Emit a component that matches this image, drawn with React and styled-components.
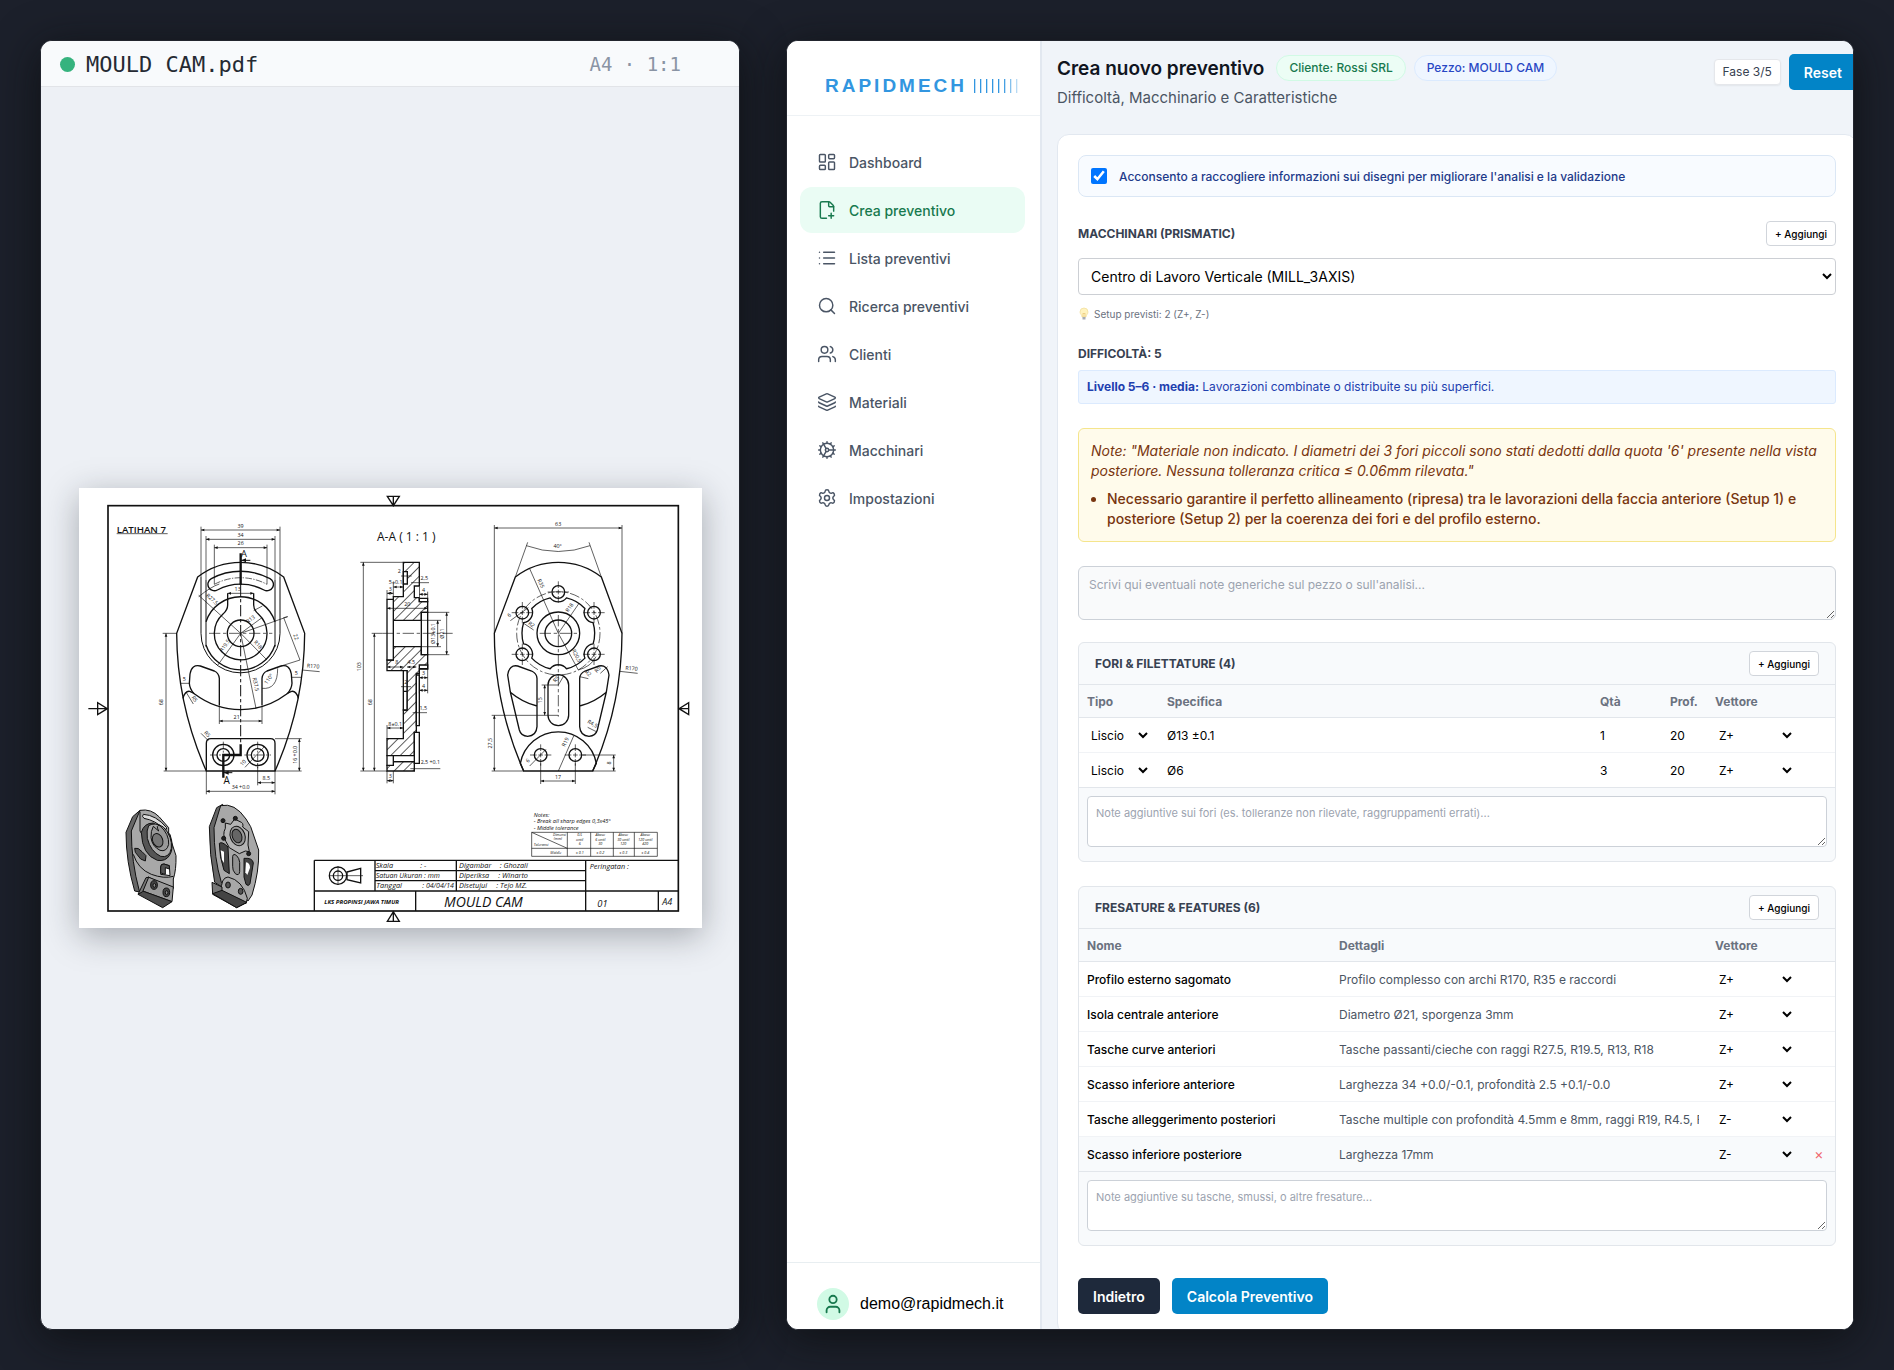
import { useState } from "react";
import styled, { createGlobalStyle, css } from "styled-components";
import { LayoutDashboard, List, Search, Users, Layers, Cog, Settings, User } from "lucide-react";

const GlobalStyle = createGlobalStyle`
    * {
        box-sizing: border-box;
    }

    body {
        margin: 0;
        background: #1c202b;
        font-family: Inter, "Liberation Sans", sans-serif;
        font-size: 12px;
        color: #000;
    }

    button, input, select, textarea {
        font-family: inherit;
    }
`

const PAGE = styled.div`
    display: grid;
    grid-template-columns: 700fr 1068fr;
    gap: 46px;
    height: 100vh;
    padding: 40px;
`

const PANEL = styled.section`
    display: flex;
    flex-direction: ${(props) => props.$row ? "row" : "column"};
    min-width: 0;
    min-height: 0;
    overflow: hidden;
    border: 1px solid #22252e;
    border-radius: 12px;
    background: ${(props) => props.$background};
    box-shadow: 0 8px 44px rgba(10, 11, 12, 0.7);
`

/* document viewer */

const FILE_BAR = styled.header`
    display: flex;
    align-items: center;
    gap: 11px;
    height: 46px;
    padding: 1px 58px 0 19px;
    border-bottom: 1px solid #e2e4e8;
    background: #f8fafc;
    font-family: "DejaVu Sans Mono", monospace;
    font-size: 22px;
    color: #252a33;
`

const DOT = styled.span`
    width: 15px;
    height: 15px;
    border-radius: 50%;
    background: #36b37e;
`

const FILE_SCALE = styled.span`
    margin-left: auto;
    font-size: 19px;
    color: #8a94a4;
`

const VIEWER = styled.div`
    display: flex;
    flex: 1;
    align-items: center;
    padding: 0 37px 0 38px;
`

const SHEET = styled.svg`
    display: block;
    width: 100%;
    background: #fff;
    box-shadow: 0 8px 32px rgba(30, 35, 45, 0.34);
    fill: none;
    stroke: #111;
    stroke-width: 4;

    text {
        fill: #111;
        stroke: none;
        font-family: "Open Sans", "Noto Sans", sans-serif;
    }

    .thin {
        stroke-width: 2;
    }

    .bold {
        stroke-width: 7;
    }

    .italic {
        font-style: italic;
    }
`

/* side bar */

const SIDEBAR = styled.aside`
    display: flex;
    flex-direction: column;
    flex: 0 0 255px;
    border-right: 2px solid #e2e8f0;
    background: #fff;
`

const BRAND = styled.div`
    display: flex;
    align-items: center;
    gap: 6px;
    height: 75px;
    padding: 16px 16px 0 38px;
    border-bottom: 1px solid #eef2f5;
    font-family: "Liberation Sans", Arial, sans-serif;
    font-size: 19px;
    font-weight: 700;
    letter-spacing: 3px;
    color: #3296e0;
`

const NAV = styled.nav`
    display: flex;
    flex: 1;
    flex-direction: column;
    gap: 2px;
    padding: 23px 15px 0 13px;
`

const NAV_LINK = styled.a`
    display: flex;
    align-items: center;
    gap: 12px;
    height: 46px;
    padding: 0 17px;
    border-radius: 12px;
    font-size: 14px;
    font-weight: 500;
    text-decoration: none;
    color: ${(props) => props.$active ? "#18794e" : "#4a5565"};
    background: ${(props) => props.$active ? "#eafcf4" : "transparent"};
`

const ACCOUNT = styled.div`
    display: flex;
    align-items: center;
    gap: 11px;
    padding: 25px 20px 9px 30px;
    border-top: 1px solid #e8eef1;
    font-family: "Liberation Sans", Arial, sans-serif;
    font-size: 16px;
`

const AVATAR = styled.span`
    display: grid;
    place-items: center;
    width: 32px;
    height: 32px;
    border-radius: 50%;
    background: #d1fae5;
    color: #18794e;
`

/* main column */

const MAIN = styled.main`
    flex: 1;
    min-width: 0;
    overflow: hidden;
    padding: 13px 0 0 15px;
    background: #f0f4f9;
`

const TOP = styled.header`
    display: flex;
    justify-content: space-between;
    align-items: flex-start;
    margin-right: -4px;
`

const TITLE_ROW = styled.div`
    display: flex;
    align-items: center;
    height: 28px;
`

const TITLE = styled.h1`
    margin: 0 12px 0 0;
    font-size: 19px;
    font-weight: 600;
    color: #10151f;
`

const CHIP = styled.span`
    margin-right: 8px;
    padding: 0 12px;
    border: 1px solid ${(props) => props.$border};
    border-radius: 13px;
    font-weight: 500;
    line-height: 24px;
    color: ${(props) => props.$color};
    background: ${(props) => props.$background};
`

const SUBTITLE = styled.p`
    margin: 4px 0 0;
    font-size: 15px;
    line-height: 24px;
    color: #4b5563;
`

const TOP_ACTIONS = styled.div`
    display: flex;
    align-items: center;
    gap: 8px;
`

const PHASE = styled.span`
    padding: 0 8px;
    border: 1px solid #e5e7eb;
    border-radius: 4px;
    line-height: 24px;
    color: #374151;
    background: #fff;
    box-shadow: 0 1px 2px rgba(0, 0, 0, 0.06);
`

const BUTTON = styled.button`
    height: 36px;
    padding: 0 15px;
    border: 0;
    border-radius: 5px;
    font-size: 14px;
    font-weight: 600;
    color: #fff;
    background: ${(props) => props.$dark ? "#1e293b" : "#0284c7"};
`

const CARD = styled.div`
    margin: 24px -4px 0 0;
    padding: 20px;
    border: 1px solid #e2e8f0;
    border-radius: 12px;
    background: #fff;
`

const CONSENT = styled.label`
    display: flex;
    align-items: center;
    gap: 12px;
    height: 42px;
    margin-bottom: 24px;
    padding: 0 12px;
    border: 1px solid #dbe7f5;
    border-radius: 8px;
    font-weight: 500;
    color: #1e3a8a;
    background: #f8fbff;
`

const CHECKBOX = styled.input`
    width: 16px;
    height: 16px;
    margin: 0;
`

const FIELD_HEAD = styled.div`
    display: flex;
    justify-content: space-between;
    align-items: center;
`

const capsText = css`
    margin: 0;
    font-size: 12px;
    font-weight: 700;
    line-height: 18px;
    color: #374151;
`

const FIELD_LABEL = styled.label`
    ${capsText}
`

const HEADING = styled.h2`
    ${capsText}
`

const ADD_BUTTON = styled.button`
    height: 25px;
    padding: 0 8px;
    border: 1px solid #d1d5db;
    border-radius: 4px;
    font-size: 10px;
    font-weight: 500;
    color: #000;
    background: #fff;
`

const MACHINE_SELECT = styled.select`
    display: block;
    width: 100%;
    height: 37px;
    margin-top: 12px;
    padding: 0 0 0 8px;
    border: 1px solid #cccfd4;
    border-radius: 4px;
    font-size: 14px;
    color: #000;
    background: #fff;
`

const HINT = styled.p`
    display: flex;
    align-items: center;
    gap: 4px;
    margin: 10px 0 22px;
    font-size: 10px;
    line-height: 18px;
    color: #6b7280;
`

const LEVEL = styled.p`
    margin: 7px 0 24px;
    padding: 0 8px;
    border: 1px solid #dbeafe;
    border-radius: 3px;
    line-height: 32px;
    color: #1e40af;
    background: #eff6ff;
`

const WARNING = styled.div`
    margin-bottom: 24px;
    padding: 12px;
    border: 1px solid #f5e58c;
    border-radius: 6px;
    font-size: 14px;
    line-height: 20px;
    color: #78350f;
    background: #fffbeb;

    p {
        margin: 0 0 8px;
        font-style: italic;
    }

    ul {
        margin: 0;
        padding-left: 16px;
        font-weight: 500;
    }
`

const NOTES = styled.textarea`
    display: block;
    width: 100%;
    height: ${(props) => props.$large ? "54px" : "51px"};
    padding: ${(props) => props.$large ? "9px 10px" : "7px 8px"};
    border: 1px solid #ccd1d8;
    border-radius: ${(props) => props.$large ? "6px" : "4px"};
    font-size: ${(props) => props.$large ? "12px" : "11px"};
    line-height: 18px;
    background: ${(props) => props.$large ? "#f9fafb" : "#fff"};

    &::placeholder {
        color: #9ca3af;
    }
`

const GROUP = styled.section`
    margin-top: ${(props) => props.$gap};
    overflow: hidden;
    border: 1px solid #e2e6eb;
    border-radius: 6px;
    background: #f8fafc;
`

const GROUP_HEAD = styled(FIELD_HEAD)`
    height: 42px;
    padding: 0 16px;
    border-bottom: 1px solid #e2e6eb;
`

const GROUP_FOOT = styled.div`
    padding: 8px 8px 14px;
`

const TABLE = styled.table`
    width: 100%;
    table-layout: fixed;
    border-collapse: separate;
    border-spacing: 0;
`

const TH = styled.th`
    width: ${(props) => props.$width || "auto"};
    height: 33px;
    padding: 0 8px;
    border-bottom: 1px solid #e2e6eb;
    font-weight: 700;
    text-align: left;
    color: #6b7280;
`

const ROW = styled.tr`
    background: ${(props) => props.$hovered ? "#f8fafc" : "#fff"};

    td {
        height: 35px;
        padding: 0 8px;
        border-bottom: 1px solid #f1f3f6;
    }

    &:last-child td {
        border-bottom-color: #e2e6eb;
    }
`

const CELL_INPUT = styled.input`
    display: block;
    width: 100%;
    padding: 0;
    border: 0;
    font-size: 12px;
    font-weight: ${(props) => props.$name ? 500 : 400};
    color: ${(props) => props.$muted ? "#4b5563" : "#000"};
    background: transparent;
`

const CELL_SELECT = styled.select`
    display: block;
    width: 100%;
    padding: 0;
    border: 0;
    font-size: 12px;
    color: #000;
    background: transparent;
`

const REMOVE = styled.button`
    display: block;
    margin: 0 auto;
    padding: 0;
    border: 0;
    font-size: 14px;
    line-height: 16px;
    color: #f0666c;
    background: transparent;
`

const FORM_ACTIONS = styled.div`
    display: flex;
    gap: 12px;
    margin-top: 32px;
`

function FilePlusIcon ({size, strokeWidth}) {
    return (
        <svg width={size} height={size} viewBox="0 0 24 24" fill="none" stroke="currentColor" strokeWidth={strokeWidth} strokeLinecap="round" strokeLinejoin="round">
            <path d="M11.35 22H6a2 2 0 0 1-2-2V4a2 2 0 0 1 2-2h8a2.4 2.4 0 0 1 1.7.7l3.6 3.6A2.4 2.4 0 0 1 20 8v5.35" />
            <path d="M14 2v5a1 1 0 0 0 1 1h5" />
            <path d="M14 19h6M17 16v6" />
        </svg>
    )
}

function BulbIcon () {
    return (
        <svg width="12" height="14" viewBox="0 0 12 14" fill="none">
            <path d="M6 1a4 4 0 0 0-4 4c0 2 2 3 2 5h4c0-2 2-3 2-5a4 4 0 0 0-4-4z" fill="#fff3bf" stroke="#f3dfa0" strokeWidth="0.8" />
            <path d="M5 10V6l1 1 1-1v4" stroke="#e8c270" strokeWidth="0.6" />
            <path d="M4.5 10h3v2.5h-3z" fill="#a8adb5" />
        </svg>
    )
}

function LogoBars () {
    const opacities = [1, 1, 1, 1, 1, 0.9, 0.6, 0.35]

    return (
        <svg width="46" height="14" viewBox="0 0 46 14">
            {opacities.map((opacity, index) => (
                <rect key={index} x={index * 6 + 1} y="0" width="1.3" height="14" fill="#3296e0" opacity={opacity} />
            ))}
        </svg>
    )
}

/* dimension line between two points on the same row or column */
function Dim ({x, y, to, vertical, label, at, size = 16}) {
    const end = vertical ? [x, to] : [to, y]
    const middle = at || [(x + end[0]) / 2, (y + end[1]) / 2]
    const heads = vertical
        ? `M${x} ${y}l-4 10h8zM${x} ${to}l-4-10h8z`
        : `M${x} ${y}l10-4v8zM${to} ${y}l-10-4v8z`
    const tx = vertical ? middle[0] - 8 : middle[0]
    const ty = vertical ? middle[1] : middle[1] - 7

    return (
        <g>
            <path className="thin" d={`M${x} ${y}L${end[0]} ${end[1]}`} />
            <path d={heads} fill="#111" stroke="none" />
            <text x={tx} y={ty} fontSize={size} textAnchor="middle" transform={vertical ? `rotate(-90 ${tx} ${ty})` : undefined}>{label}</text>
        </g>
    )
}

function Note ({x, y, angle = 0, size = 16, children}) {
    return <text x={x} y={y} fontSize={size} textAnchor="middle" transform={`rotate(${angle} ${x} ${y})`}>{children}</text>
}

function FrontView () {
    return (
        <g transform="translate(-24 -24)">
            <text x="137" y="159" fontSize="29" fontWeight="600">LATIHAN 7</text>
            <path className="thin" d="M137 161H290" />
            <path d="M380 291A212 212 0 0 1 638 291L701 460A1030 1030 0 0 1 612 873H406A1030 1030 0 0 1 317 460Z" />
            <path className="thin" d="M390 140V290M627 140V290" />
            <path d="M390 290V460A118 118 0 0 0 627 460V290M405 300V500M612 300V500" strokeWidth="3" />
            <path d="M405 425A109 109 0 0 1 612 425M405 495A109 109 0 0 0 612 495" />
            <path d="M470 340V375Q470 390 456 402A79 79 0 1 0 562 402Q548 390 548 375V340" />
            <circle cx="509" cy="460" r="40" />
            <path d="M421 296A186 186 0 0 1 597 296A19 19 0 0 1 579 330A148 148 0 0 0 439 330A19 19 0 0 1 421 296Z" />
            <path className="thin" d="M430 313A167 167 0 0 1 588 313" strokeDasharray="20 4 4 4" />
            <path d="M445 675V595Q443 578 430 573L388 558Q362 552 357 582L355 610Q356 626 368 640" />
            <path d="M573 675V595Q575 578 588 573L630 558Q656 552 661 582L663 610Q662 626 650 640" />
            <path d="M336 655Q342 632 356 634Q366 637 372 643A228 228 0 0 0 646 643Q652 637 662 634Q676 632 682 655" />
            <path d="M406 873V790Q406 776 420 776H598Q612 776 612 790V873" />
            {[457, 560].map((x) => (
                <g key={x}>
                    <circle cx={x} cy="825" r="32" />
                    <circle cx={x} cy="825" r="19" />
                    <path className="thin" d={`M${x - 40} 825H${x + 40}M${x} 785V865`} strokeDasharray="22 5 6 5" />
                </g>
            ))}
            <path d="M509 315V790" strokeDasharray="34 8 10 8" strokeWidth="3" />
            <path className="thin" d="M414 460H604" strokeDasharray="34 8 10 8" />
            <path className="bold" d="M509 220V315M509 793V825H457V893" />
            <path d="M509 241H538M457 878H484" strokeWidth="3" />
            <path d="M511 241l14-6v12zM459 878l14-6v12z" fill="#111" stroke="none" />
            <Note x={519} y={231} size={28}>A</Note>
            <Note x={467} y={912} size={30}>A</Note>

            <path className="thin" d="M405 168V300M612 168V300M430 194V313M588 194V313" />
            <Dim x={390} y={150} to={627} label="39" />
            <Dim x={405} y={178} to={612} label="34" />
            <Dim x={430} y={203} to={588} label="26" />
            <Dim x={470} y={340} to={548} label="13" at={[500, 340]} />
            <path className="thin" d="M275 460H317M278 873H406M612 776H692M612 873H692M406 873V943M612 873V943M560 850V916M445 675V732M573 675V732" />
            <Dim x={285} y={460} to={873} vertical label="68" />
            <Dim x={685} y={776} to={873} vertical label="16 +0.0" />
            <Dim x={445} y={723} to={573} label="21" at={[497, 723]} />
            <Dim x={406} y={934} to={612} label="34 +0.0" />
            <Dim x={560} y={908} to={612} label="8.5" />
            <path className="thin" d="M509 460L383 346M509 460L440 556M509 460L588 540M509 460L573 413M509 460L555 685M509 460L650 410L638 413L687 540L630 558M693 570L746 575M328 610H357M661 592H690M345 636L367 672M390 760L412 782M522 862L580 800M383 350Q420 320 445 312M548 392L574 378M573 625Q620 630 620 565" />
            <Note x={420} y={362} angle={42}>R27.5</Note>
            <Note x={466} y={500} angle={-54}>R19.5</Note>
            <Note x={557} y={498} angle={47}>R18</Note>
            <Note x={542} y={422} angle={-36}>R13</Note>
            <Note x={549} y={614} angle={78}>R37.5</Note>
            <Note x={670} y={473} angle={68}>22</Note>
            <Note x={726} y={564} angle={5}>R170</Note>
            <Note x={598} y={600} angle={-55}>110°</Note>
            <Note x={340} y={602}>5</Note>
            <Note x={676} y={584}>5</Note>
            <Note x={366} y={660} angle={55}>R5</Note>
            <Note x={405} y={766} angle={45}>R5</Note>
            <Note x={520} y={852} angle={-45}>10</Note>
        </g>
    )
}

function SectionView () {
    return (
        <g transform="translate(786 -24)">
            <text x="108" y="184" fontSize="36">A-A ( 1 : 1 )</text>
            <path fill="url(#hatch)" d="M187 247H235V365H260V397H241V421H157V350H187Z" />
            <path fill="url(#hatch)" d="M157 500H241V524H260V567H235V580H226V757H220V827H138V776H187V690H198V572H138V540H157Z" />
            <path fill="url(#hatch)" d="M157 845H220V873H138V856H157Z" />
            <path fill="#fff" d="M187 275H199V312H187ZM235 318H220V353H235M138 358H157V540H138ZM241 397H260V524H241ZM235 355H260V365H235ZM235 555H260V566H235ZM187 572H198V690H187ZM187 634H198M226 585H235V737H226ZM220 757H235V850H220ZM138 827H157V856H138ZM157 827H220V845H157Z" />
            <path className="thin" d="M125 460H335" strokeDasharray="34 8 10 8" />
            <path className="thin" d="M58 247H187M58 873H138M92 460H125M260 397H325M260 524H325M241 421H300M241 500H300M138 735V776M157 873V910M138 873V910M138 330V358M157 310V350M260 335V355M260 567V640M235 567V640" />
            <Dim x={67} y={247} to={873} vertical label="103" />
            <Dim x={100} y={460} to={873} vertical label="68" />
            <Dim x={290} y={421} to={500} vertical label="Ø13±0.1" />
            <Dim x={317} y={397} to={524} vertical label="Ø21" />
            <Dim x={138} y={385} to={260} label="20" />
            <Dim x={157} y={321} to={187} label="5±0.1" at={[164, 320]} />
            <Dim x={138} y={340} to={157} label="3" />
            <Dim x={138} y={561} to={187} label="8" at={[167, 558]} />
            <Dim x={198} y={561} to={226} label="4.5" at={[211, 558]} />
            <Dim x={138} y={744} to={187} label="8±0.1" />
            <Dim x={235} y={343} to={260} label="4" />
            <Dim x={235} y={593} to={260} label="3" />
            <Dim x={235} y={631} to={260} label="4" />
            <Dim x={138} y={902} to={157} label="3" />
            <path className="thin" d="M180 288H212M210 308H264M180 620H210M215 698H258M208 866H298" />
            <Note x={175} y={280}>2</Note>
            <Note x={250} y={299}>2,5</Note>
            <Note x={194} y={612}>2</Note>
            <Note x={247} y={689}>1,5</Note>
            <Note x={268} y={853}>2,5 +0.1</Note>
        </g>
    )
}

/* contour of the raised flange, notched around each bolt hole */
function flangePath () {
    const point = (radius, degrees) => {
        const angle = degrees * Math.PI / 180
        return `${652 + radius * Math.cos(angle)} ${460 + radius * Math.sin(angle)}`
    }
    const parts = [30, 90, 150, 210, 270, 330].map((angle, index) => (
        `${index === 0 ? "M" : "A109 109 0 0 1 "}${point(109, angle - 13)}A31 31 0 0 0 ${point(109, angle + 13)}`
    ))
    return `${parts.join("")}A109 109 0 0 1 ${point(109, 17)}`
}

function RearView () {
    const holes = [[652, 336], [544, 398], [759, 398], [544, 523], [759, 523], [599, 825], [703, 825]]

    return (
        <g transform="translate(786 -24)">
            <path d="M523 291A212 212 0 0 1 781 291L843 460A1030 1030 0 0 1 755 873H548A1030 1030 0 0 1 460 460Z" />
            <path d={flangePath()} />
            <circle cx="652" cy="460" r="64" />
            <circle cx="652" cy="460" r="40" />
            <circle className="thin" cx="652" cy="460" r="125" strokeDasharray="30 7 8 7" />
            {holes.map(([x, y]) => (
                <g key={`${x}-${y}`}>
                    <circle cx={x} cy={y} r="19" />
                    <path className="thin" d={`M${x - 32} ${y}H${x + 32}M${x} ${y - 32}V${y + 32}`} strokeDasharray="20 5 14 5" />
                </g>
            ))}
            <rect x="621" y="584" width="62" height="153" rx="31" />
            <path d="M500 585Q505 553 530 558L572 573Q587 580 588 595V740Q586 768 560 769Q540 768 535 750L508 636ZM507 636Q545 668 588 678" />
            <path d="M804 585Q799 553 774 558L732 573Q717 580 716 595V740Q718 768 744 769Q764 768 769 750L796 636ZM797 636Q759 668 716 678" />
            <path d="M548 873L538 850A116 116 0 0 1 766 850L755 873" />
            <path className="thin" d="M652 405V710M596 460H708" strokeDasharray="34 8 10 8" />
            <path className="thin" d="M460 460V135M843 460V135M523 291L560 187M781 291L744 187M452 706H652M452 873H548M755 873H824M725 825H824M599 850V912M703 850V912M602 615H652" />
            <Dim x={460} y={144} to={843} label="63" />
            <path className="thin" d="M556 197Q652 232 747 197" />
            <Note x={650} y={204}>40°</Note>
            <Dim x={460} y={706} to={873} vertical label="27,5" />
            <Dim x={611} y={615} to={706} vertical label="15" />
            <Dim x={818} y={825} to={873} vertical label="8" />
            <Dim x={599} y={903} to={703} label="17" />
            <path className="thin" d="M652 460L566 266M652 460L714 370M652 460L712 570M652 615L668 588M652 873L698 768M836 574L890 580M508 422L562 383M548 430L578 450M566 858L615 808M712 570Q750 560 765 530M716 590L742 596M778 580L800 560M740 742L768 756" />
            <Note x={595} y={313} angle={65}>R35</Note>
            <Note x={690} y={386} angle={-55}>R18</Note>
            <Note x={702} y={530} angle={62}>R20,5</Note>
            <Note x={568} y={438} angle={35}>R2</Note>
            <Note x={650} y={601} angle={-50}>R5</Note>
            <Note x={678} y={788} angle={-66}>R19</Note>
            <Note x={871} y={571} angle={5}>R170</Note>
            <Note x={752} y={736} angle={28}>R4,5</Note>
            <Note x={774} y={572} angle={-45}>R5</Note>
            <Note x={738} y={584} angle={40}>R2</Note>
            <Note x={508} y={410} angle={-35}>6</Note>
            <Note x={564} y={846} angle={-45}>6</Note>
        </g>
    )
}

function SolidViews () {
    return (
        <g transform="translate(111 921)" strokeWidth="3">
            <path fill="#666" d="M30 112L50 65L72 46L110 60L80 291L66 290L56 288Q30 200 30 112Z" />
            <path fill="#a8a8a8" d="M46 108L72 46Q105 40 130 66L158 98V115L180 182Q181 225 172 252V280L96 246L78 290L70 288Q46 200 46 108Z" />
            <path d="M72 50V108L78 118" />
            <path fill="#ddd" d="M82 58Q120 60 152 98Q154 106 144 102Q118 76 84 70Q76 64 82 58Z" />
            <path fill="#555" d="M76 112Q84 84 112 84L162 118Q176 160 160 182Q148 200 124 196Q78 180 76 112Z" />
            <path fill="#a8a8a8" d="M98 92Q116 80 142 96Q170 125 166 160Q160 190 134 184Q104 170 94 130Q91 105 98 92Z" />
            <path fill="#999" d="M112 94L128 108Q118 88 132 92Q160 118 158 148Q152 172 132 166Q108 154 105 128Q104 108 112 94Z" />
            <ellipse fill="#777" cx="125" cy="136" rx="15" ry="21" transform="rotate(-22 125 136)" />
            <path fill="#555" d="M56 160Q66 156 78 170L90 182L88 198L74 192L58 172Z" />
            <path fill="#fff" d="M134 216Q134 206 144 207L160 212L162 242L150 240L134 238Z" />
            <path fill="#555" d="M134 216Q134 206 144 207L160 212V222L148 218V238L134 234Z" />
            <path d="M52 178Q66 222 106 238Q144 252 172 244" />
            <path fill="#9a9a9a" d="M80 288L96 246L172 276L168 320Z" />
            <path fill="#4c4c4c" d="M66 298L80 288L168 320L140 338Z" />
            <path fill="#777" d="M66 298L90 248L98 247L80 290Z" />
            <ellipse fill="#444" cx="114" cy="270" rx="10" ry="13" />
            <ellipse fill="#444" cx="151" cy="292" rx="10" ry="13" />
            <ellipse fill="#888" cx="115" cy="271" rx="4" ry="6" />
            <ellipse fill="#888" cx="152" cy="293" rx="4" ry="6" />

            <path fill="#666" d="M280 95L302 38L320 28L340 290L296 262Q280 180 280 95Z" />
            <path fill="#a8a8a8" d="M294 98L314 32Q356 22 390 72L404 95L428 165Q430 230 408 300L396 318L316 262Q294 190 294 98Z" />
            <path fill="#b4b4b4" d="M328 84L344 88L356 72L372 80Q384 84 380 96L398 110L396 150L400 170L388 168L370 176L340 158L330 140Q318 118 328 100Z" />
            <ellipse fill="#999" cx="365" cy="123" rx="22" ry="30" transform="rotate(-20 365 123)" />
            <ellipse fill="#666" cx="363" cy="123" rx="14" ry="21" transform="rotate(-20 363 123)" />
            {[[321, 77], [358, 70], [323, 130], [398, 176]].map(([x, y]) => (
                <circle key={`${x}-${y}`} cx={x} cy={y} r="6" fill="#222" />
            ))}
            <path fill="#444" d="M310 145Q318 138 336 156L340 236L324 226Q310 185 310 145Z" />
            <path fill="#fff" stroke="none" d="M314 166L324 170V204L318 194Z" />
            <path fill="#909090" d="M350 184Q352 174 362 182Q370 190 371 202V230Q369 244 358 236Q349 226 350 214Z" />
            <path fill="#444" d="M384 190Q410 188 412 204L402 266Q398 276 390 268L384 246Z" />
            <path fill="#fff" stroke="none" d="M390 202Q402 204 402 218L394 240L388 232Z" />
            <path fill="#a8a8a8" d="M316 290Q314 248 336 246Q380 256 394 310L390 326Z" />
            <path fill="#777" d="M288 262L318 276V290L390 324L362 338L290 298Z" />
            <path fill="#444" d="M290 296L318 286L392 322L362 338Z" />
            <ellipse fill="#555" cx="336" cy="270" rx="7" ry="9" />
            <ellipse fill="#555" cx="374" cy="289" rx="7" ry="9" />
        </g>
    )
}

function TitleBlock () {
    const tolerances = [["0,5", "until", "6", "± 0.1"], ["Above", "6 until", "30", "± 0.2"], ["Above", "30 until", "120", "± 0.3"], ["Above", "120 until", "420", "± 0.4"]]

    return (
        <g transform="translate(666 906)">
            <path d="M40 211H1132M40 211V363M40 303H1132M222 211V303M222 242H854M222 272H854M466 211V303M854 211V363M344 303V363M1072 303V363" />
            <circle cx="111" cy="257" r="26" />
            <circle cx="111" cy="257" r="14" />
            <path d="M138 246L179 235V279L138 269Z" />
            <path className="thin" d="M84 257H186M111 229V285" />
            <g className="italic" fontSize="22">
                <text x="224" y="234">Skala</text>
                <text x="358" y="234">: -</text>
                <text x="224" y="264" fontSize="21">Satuan Ukuran : mm</text>
                <text x="226" y="295">Tanggal</text>
                <text x="364" y="295" fontSize="21">: 04/04/14</text>
                <text x="474" y="234">Digambar</text>
                <text x="596" y="234">: Ghozali</text>
                <text x="474" y="264">Diperiksa</text>
                <text x="592" y="264">: Winarto</text>
                <text x="474" y="295">Disetujui</text>
                <text x="586" y="295">: Tejo MZ.</text>
                <text x="866" y="237">Peringatan :</text>
                <text x="889" y="350" fontSize="28">01</text>
                <text x="1084" y="346" fontSize="27">A4</text>
                <text x="70" y="343" fontSize="18" fontWeight="700">LKS PROPINSI JAWA TIMUR</text>
                <text x="429" y="352" fontSize="42">MOULD CAM</text>
            </g>
            <g className="italic" fontSize="17">
                <text x="698" y="80">Notes:</text>
                <text x="698" y="100">- Break all sharp edges 0,3x45°</text>
                <text x="698" y="120">- Middle tolerance</text>
            </g>
            <path className="thin" d="M692 127H1069V199H692ZM692 175H1069M799 127V199M869 127V199M937 127V199M1000 127V199M692 127L799 175" />
            <g className="italic" fontSize="11">
                <text x="756" y="137">Dimensi</text>
                <text x="758" y="149">(mm)</text>
                <text x="698" y="167">Toleransi</text>
                <text x="748" y="192">Middle</text>
                {tolerances.map((lines, column) => lines.map((line, index) => (
                    <text key={`${column}-${index}`} x={[836, 898, 967, 1033][column]} y={[139, 152, 165, 191][index]} textAnchor="middle">{line}</text>
                )))}
            </g>
        </g>
    )
}

function Drawing () {
    return (
        <SHEET viewBox="0 0 1869 1320" role="img" aria-label="MOULD CAM">
            <defs>
                <pattern id="hatch" width="20" height="20" patternUnits="userSpaceOnUse" patternTransform="rotate(45)">
                    <path className="thin" d="M10 0V20" />
                </pattern>
            </defs>
            <rect x="87" y="53" width="1711" height="1216" strokeWidth="5" />
            <path d="M943 53V25M925 25H961L943 53Z" />
            <path d="M943 1269V1302M925 1300H961L943 1271Z" />
            <path d="M28 662H87M56 644V680L85 662Z" />
            <path d="M1798 662H1829M1829 644V680L1800 662Z" />
            <FrontView />
            <SectionView />
            <RearView />
            <SolidViews />
            <TitleBlock />
        </SHEET>
    )
}

const navItems = [
    {label: "Dashboard", icon: LayoutDashboard},
    {label: "Crea preventivo", icon: FilePlusIcon, active: true},
    {label: "Lista preventivi", icon: List},
    {label: "Ricerca preventivi", icon: Search},
    {label: "Clienti", icon: Users},
    {label: "Materiali", icon: Layers},
    {label: "Macchinari", icon: Cog},
    {label: "Impostazioni", icon: Settings}
]

const holeRows = [
    {spec: "Ø13 ±0.1", quantity: "1", depth: "20"},
    {spec: "Ø6", quantity: "3", depth: "20"}
]

const featureRows = [
    {name: "Profilo esterno sagomato", details: "Profilo complesso con archi R170, R35 e raccordi", vector: "Z+"},
    {name: "Isola centrale anteriore", details: "Diametro Ø21, sporgenza 3mm", vector: "Z+"},
    {name: "Tasche curve anteriori", details: "Tasche passanti/cieche con raggi R27.5, R19.5, R13, R18", vector: "Z+"},
    {name: "Scasso inferiore anteriore", details: "Larghezza 34 +0.0/-0.1, profondità 2.5 +0.1/-0.0", vector: "Z+"},
    {name: "Tasche alleggerimento posteriori", details: "Tasche multiple con profondità 4.5mm e 8mm, raggi R19, R4.5, R5", vector: "Z-"},
    {name: "Scasso inferiore posteriore", details: "Larghezza 17mm", vector: "Z-", hovered: true}
]

function VectorSelect ({value}) {
    return (
        <CELL_SELECT aria-label="Vettore" defaultValue={value}>
            <option>Z+</option>
            <option>Z-</option>
        </CELL_SELECT>
    )
}

function Sidebar () {
    return (
        <SIDEBAR>
            <BRAND>
                <span>RAPIDMECH</span>
                <LogoBars />
            </BRAND>
            <NAV>
                {navItems.map(({label, icon: Icon, active}) => (
                    <NAV_LINK key={label} href="#" $active={active}>
                        <Icon size={20} strokeWidth={1.75} />
                        {label}
                    </NAV_LINK>
                ))}
            </NAV>
            <ACCOUNT>
                <AVATAR><User size={22} strokeWidth={2} /></AVATAR>
                demo@rapidmech.it
            </ACCOUNT>
        </SIDEBAR>
    )
}

function HolesGroup () {
    return (
        <GROUP $gap="22px">
            <GROUP_HEAD>
                <HEADING>FORI & FILETTATURE (4)</HEADING>
                <ADD_BUTTON type="button">+ Aggiungi</ADD_BUTTON>
            </GROUP_HEAD>
            <TABLE>
                <thead>
                    <tr>
                        <TH $width="80px">Tipo</TH>
                        <TH>Specifica</TH>
                        <TH $width="70px">Qtà</TH>
                        <TH $width="45px">Prof.</TH>
                        <TH $width="96px">Vettore</TH>
                        <TH $width="32px" />
                    </tr>
                </thead>
                <tbody>
                    {holeRows.map((row) => (
                        <ROW key={row.spec}>
                            <td>
                                <CELL_SELECT aria-label="Tipo">
                                    <option>Liscio</option>
                                </CELL_SELECT>
                            </td>
                            <td><CELL_INPUT aria-label="Specifica" defaultValue={row.spec} /></td>
                            <td><CELL_INPUT aria-label="Qtà" defaultValue={row.quantity} /></td>
                            <td><CELL_INPUT aria-label="Prof." defaultValue={row.depth} /></td>
                            <td><VectorSelect value="Z+" /></td>
                            <td />
                        </ROW>
                    ))}
                </tbody>
            </TABLE>
            <GROUP_FOOT>
                <NOTES aria-label="Note fori" placeholder="Note aggiuntive sui fori (es. tolleranze non rilevate, raggruppamenti errati)..." />
            </GROUP_FOOT>
        </GROUP>
    )
}

function FeaturesGroup () {
    return (
        <GROUP $gap="24px">
            <GROUP_HEAD>
                <HEADING>FRESATURE & FEATURES (6)</HEADING>
                <ADD_BUTTON type="button">+ Aggiungi</ADD_BUTTON>
            </GROUP_HEAD>
            <TABLE>
                <thead>
                    <tr>
                        <TH $width="33.33%">Nome</TH>
                        <TH>Dettagli</TH>
                        <TH $width="96px">Vettore</TH>
                        <TH $width="32px" />
                    </tr>
                </thead>
                <tbody>
                    {featureRows.map((row) => (
                        <ROW key={row.name} $hovered={row.hovered}>
                            <td><CELL_INPUT aria-label="Nome" $name defaultValue={row.name} /></td>
                            <td><CELL_INPUT aria-label="Dettagli" $muted defaultValue={row.details} /></td>
                            <td><VectorSelect value={row.vector} /></td>
                            <td>{row.hovered && <REMOVE type="button" aria-label="Rimuovi">×</REMOVE>}</td>
                        </ROW>
                    ))}
                </tbody>
            </TABLE>
            <GROUP_FOOT>
                <NOTES aria-label="Note fresature" placeholder="Note aggiuntive su tasche, smussi, o altre fresature..." />
            </GROUP_FOOT>
        </GROUP>
    )
}

function App () {
    const [consent, setConsent] = useState(true)

    return (
        <>
            <GlobalStyle />
            <PAGE>
                <PANEL $background="#edf0f5">
                    <FILE_BAR>
                        <DOT />
                        <span>MOULD CAM.pdf</span>
                        <FILE_SCALE>A4 · 1:1</FILE_SCALE>
                    </FILE_BAR>
                    <VIEWER>
                        <Drawing />
                    </VIEWER>
                </PANEL>
                <PANEL $row $background="#f0f4f9">
                    <Sidebar />
                    <MAIN>
                        <TOP>
                            <div>
                                <TITLE_ROW>
                                    <TITLE>Crea nuovo preventivo</TITLE>
                                    <CHIP $color="#18794e" $border="#d1fae5" $background="#ecfdf5">Cliente: Rossi SRL</CHIP>
                                    <CHIP $color="#2847c4" $border="#dbeafe" $background="#eff6ff">Pezzo: MOULD CAM</CHIP>
                                </TITLE_ROW>
                                <SUBTITLE>Difficoltà, Macchinario e Caratteristiche</SUBTITLE>
                            </div>
                            <TOP_ACTIONS>
                                <PHASE>Fase 3/5</PHASE>
                                <BUTTON type="button">Reset</BUTTON>
                            </TOP_ACTIONS>
                        </TOP>
                        <CARD>
                            <CONSENT>
                                <CHECKBOX type="checkbox" checked={consent} onChange={(event) => setConsent(event.target.checked)} />
                                Acconsento a raccogliere informazioni sui disegni per migliorare l'analisi e la validazione
                            </CONSENT>
                            <FIELD_HEAD>
                                <FIELD_LABEL htmlFor="macchinari">MACCHINARI (PRISMATIC)</FIELD_LABEL>
                                <ADD_BUTTON type="button">+ Aggiungi</ADD_BUTTON>
                            </FIELD_HEAD>
                            <MACHINE_SELECT id="macchinari">
                                <option>Centro di Lavoro Verticale (MILL_3AXIS)</option>
                            </MACHINE_SELECT>
                            <HINT><BulbIcon />Setup previsti: 2 (Z+, Z-)</HINT>
                            <HEADING>DIFFICOLTÀ: 5</HEADING>
                            <LEVEL><strong>Livello 5–6 · media:</strong> Lavorazioni combinate o distribuite su più superfici.</LEVEL>
                            <WARNING>
                                <p>Note: "Materiale non indicato. I diametri dei 3 fori piccoli sono stati dedotti dalla quota '6' presente nella vista posteriore. Nessuna tolleranza critica ≤ 0.06mm rilevata."</p>
                                <ul>
                                    <li>Necessario garantire il perfetto allineamento (ripresa) tra le lavorazioni della faccia anteriore (Setup 1) e posteriore (Setup 2) per la coerenza dei fori e del profilo esterno.</li>
                                </ul>
                            </WARNING>
                            <NOTES $large aria-label="Note generiche" placeholder="Scrivi qui eventuali note generiche sul pezzo o sull'analisi..." />
                            <HolesGroup />
                            <FeaturesGroup />
                            <FORM_ACTIONS>
                                <BUTTON type="button" $dark>Indietro</BUTTON>
                                <BUTTON type="button">Calcola Preventivo</BUTTON>
                            </FORM_ACTIONS>
                        </CARD>
                    </MAIN>
                </PANEL>
            </PAGE>
        </>
    )
}

export default App
